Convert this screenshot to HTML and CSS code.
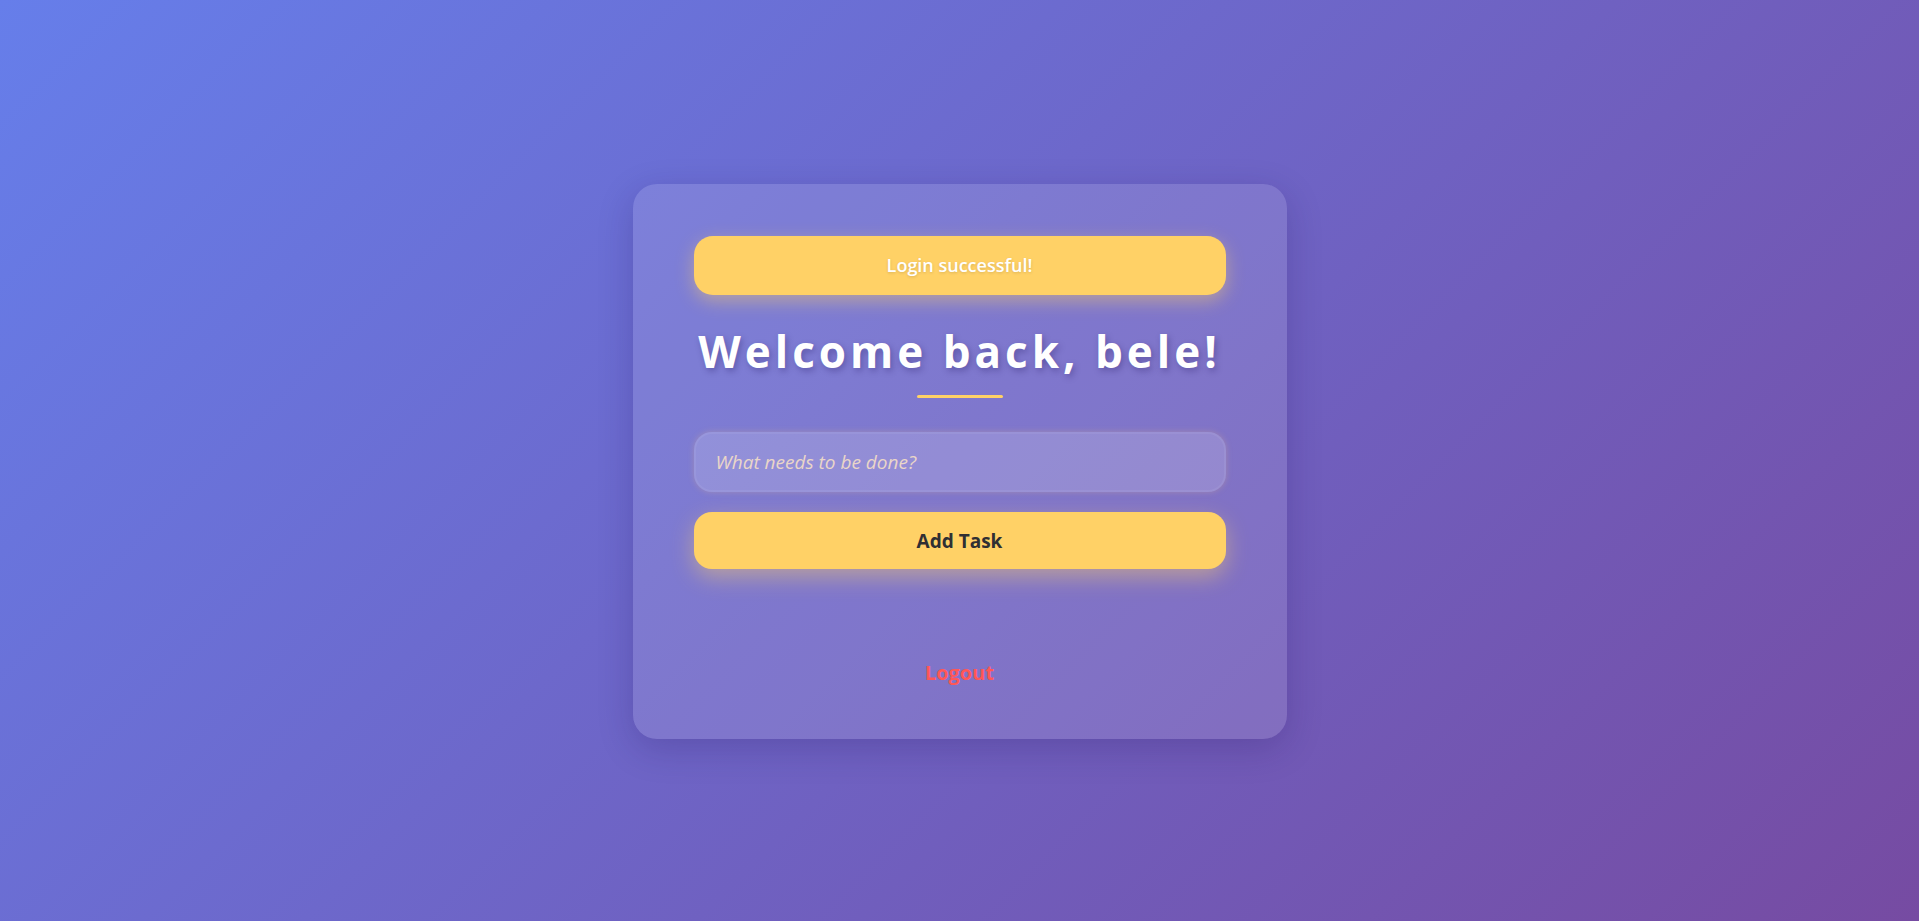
FILE: index.html
```html
<!DOCTYPE html>
<html lang="en">
<head>
<meta charset="utf-8">
<title>Todo</title>
<link rel="stylesheet" href="styles.css">
</head>
<body>
<main class="page">
  <section class="card">
    <div class="message">Login successful!</div>
    <h1 class="title">Welcome back, bele!</h1>
    <div class="underline"></div>
    <form class="task-form">
      <input class="task-input" type="text" placeholder="What needs to be done?">
      <button class="add-btn" type="button">Add Task</button>
    </form>
    <ul class="task-list"></ul>
    <a class="logout" href="#">Logout</a>
  </section>
</main>
</body>
</html>
```
FILE: styles.css
```css
* { box-sizing: border-box; }
html, body { margin: 0; padding: 0; height: 100%; }
body {
  font-family: "Open Sans", "Noto Sans", sans-serif;
  background: linear-gradient(135deg, #667eea 0%, #764ba2 100%);
  min-height: 921px;
}
.page {
  min-height: 921px;
  display: flex;
  justify-content: center;
  align-items: flex-start;
  padding-top: 184px;
}
.card {
  width: 654px;
  padding: 52px 61px 53px;
  background: rgba(255, 255, 255, 0.12);
  border-radius: 24px;
  box-shadow: 0 10px 35px rgba(30, 20, 90, 0.22);
  display: flex;
  flex-direction: column;
  align-items: stretch;
}
.message {
  height: 59px;
  display: flex;
  align-items: center;
  justify-content: center;
  padding-bottom: 1px;
  background: #ffd166;
  border-radius: 19px;
  color: #fff;
  font-weight: 600;
  font-size: 18px;
  text-shadow: 0 1px 3px rgba(0, 0, 0, 0.15);
  box-shadow: 0 6px 18px rgba(255, 209, 102, 0.45);
}
.title {
  margin: 29px -20px 0;
  text-align: center;
  white-space: nowrap;
  color: #fff;
  font-weight: 700;
  font-size: 44px;
  line-height: 54px;
  letter-spacing: 4px;
  text-shadow: 2px 3px 6px rgba(40, 30, 100, 0.35);
}
.underline {
  width: 86px;
  height: 3px;
  margin: 17px auto 0;
  background: #ffd166;
  border-radius: 2px;
}
.task-form {
  margin-top: 34px;
  display: flex;
  flex-direction: column;
  gap: 20px;
}
.task-input {
  height: 60px;
  width: 100%;
  border: 2px solid rgba(255, 255, 255, 0.06);
  border-radius: 18px;
  background: rgba(255, 255, 255, 0.16);
  padding: 0 20px;
  font-family: "Open Sans", sans-serif;
  font-size: 19px;
  color: #fff;
  outline: none;
  box-shadow: 0 0 6px rgba(255, 200, 120, 0.25);
}
.task-input::placeholder {
  color: #ead6c8;
  font-style: italic;
}
.add-btn {
  height: 57px;
  width: 100%;
  border: none;
  border-radius: 18px;
  background: #ffd166;
  color: #2f2f33;
  font-family: "Open Sans", sans-serif;
  font-weight: 700;
  font-size: 19px;
  cursor: pointer;
  box-shadow: 0 8px 22px rgba(255, 209, 102, 0.45);
}
.task-list {
  list-style: none;
  margin: 0;
  padding: 0;
  min-height: 90px;
}
.logout {
  align-self: center;
  color: #ff5757;
  font-weight: 700;
  font-size: 20px;
  text-decoration: none;
  line-height: 27px;
}
```
